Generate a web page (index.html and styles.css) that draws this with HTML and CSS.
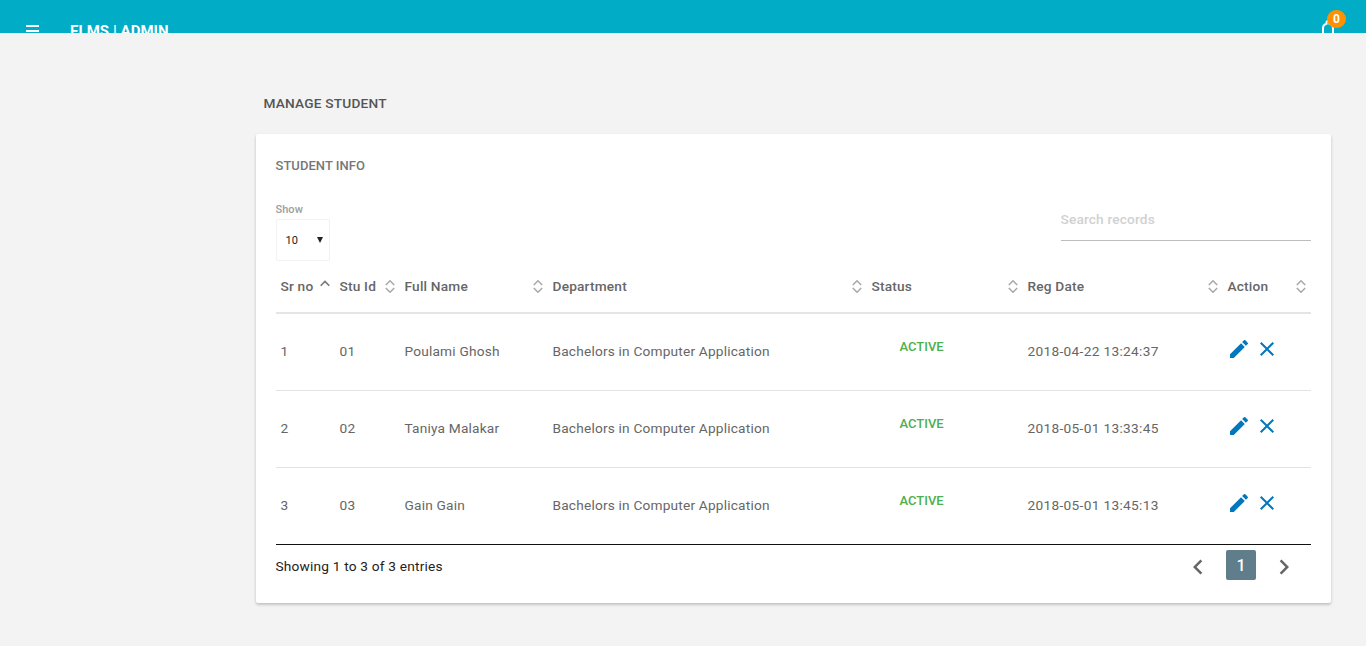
FILE: index.html
```html
<!DOCTYPE html>
<html lang="en">
<head>
<meta charset="utf-8">
<title>ELMS | Admin</title>
<link rel="stylesheet" href="styles.css">
</head>
<body>
<svg class="defs" width="0" height="0" aria-hidden="true">
  <symbol id="sort" viewBox="0 0 10 14"><path d="M.8 6 5 1.800 9.200 6M.8 9 5 13.200 9.200 9" fill="none" stroke="currentColor" stroke-width="1.600"/></symbol>
  <symbol id="asc" viewBox="0 0 10 14"><path d="M.7 6.700 5 2.400 9.300 6.700" fill="none" stroke="currentColor" stroke-width="1.600"/></symbol>
  <symbol id="edit" viewBox="0 0 24 24"><path d="M3 17.250V21h3.750L17.810 9.940l-3.750-3.750L3 17.250zM20.710 7.040a1 1 0 0 0 0-1.410l-2.340-2.340a1 1 0 0 0-1.410 0l-1.830 1.830 3.750 3.750 1.830-1.830z"/></symbol>
  <symbol id="clear" viewBox="0 0 24 24"><path d="M19 6.410 17.590 5 12 10.590 6.410 5 5 6.410 10.590 12 5 17.590 6.410 19 12 13.410 17.590 19 19 17.590 13.410 12z"/></symbol>
  <symbol id="left" viewBox="0 0 24 24"><path d="M15.410 7.410 14 6l-6 6 6 6 1.410-1.410L10.830 12z"/></symbol>
  <symbol id="right" viewBox="0 0 24 24"><path d="M10 6 8.590 7.410 13.170 12l-4.580 4.590L10 18l6-6z"/></symbol>
</svg>
<header class="topbar">
  <svg class="menu" viewBox="0 0 13 12"><path d="M0 0h13v2H0zM0 5h13v2H0zM0 10h13v2H0z"/></svg>
  <span class="brand">ELMS | ADMIN</span>
  <div class="alerts">
    <svg class="bell" viewBox="0 0 12 16"><path d="M1 16V8.500C1 5.800 2.300 4.300 4.500 3.800V2.500a1.500 1.500 0 0 1 3 0v1.300C9.700 4.300 11 5.800 11 8.500V16" fill="none" stroke="currentColor" stroke-width="2"/></svg>
    <span class="badge">0</span>
  </div>
</header>
<main class="content">
  <h1 class="page-title">MANAGE STUDENT</h1>
  <section class="card">
    <h2 class="card-title">STUDENT INFO</h2>
    <div class="tools">
      <div class="length"><span class="length-label">Show</span><div class="select"><span>10</span><svg class="caret" viewBox="0 0 6 6"><path d="M0 0h6L3 6z"/></svg></div></div>
      <input class="search" type="text" placeholder="Search records">
    </div>
    <table class="table">
      <colgroup><col class="c1"><col class="c2"><col class="c3"><col class="c4"><col class="c5"><col class="c6"><col class="c7"></colgroup>
      <thead><tr>
        <th><div class="th">Sr no<svg class="sort asc"><use href="#asc"/></svg></div></th>
        <th><div class="th">Stu Id<svg class="sort"><use href="#sort"/></svg></div></th>
        <th><div class="th">Full Name<svg class="sort"><use href="#sort"/></svg></div></th>
        <th><div class="th">Department<svg class="sort"><use href="#sort"/></svg></div></th>
        <th><div class="th">Status<svg class="sort"><use href="#sort"/></svg></div></th>
        <th><div class="th">Reg Date<svg class="sort"><use href="#sort"/></svg></div></th>
        <th><div class="th">Action<svg class="sort"><use href="#sort"/></svg></div></th>
      </tr></thead>
      <tbody>
        <tr><td>1</td><td>01</td><td>Poulami Ghosh</td><td>Bachelors in Computer Application</td><td><span class="status">ACTIVE</span></td><td class="date">2018-04-22 13:24:37</td><td><div class="actions"><svg><use href="#edit"/></svg><svg><use href="#clear"/></svg></div></td></tr>
        <tr><td>2</td><td>02</td><td>Taniya Malakar</td><td>Bachelors in Computer Application</td><td><span class="status">ACTIVE</span></td><td class="date">2018-05-01 13:33:45</td><td><div class="actions"><svg><use href="#edit"/></svg><svg><use href="#clear"/></svg></div></td></tr>
        <tr><td>3</td><td>03</td><td>Gain Gain</td><td>Bachelors in Computer Application</td><td><span class="status">ACTIVE</span></td><td class="date">2018-05-01 13:45:13</td><td><div class="actions"><svg><use href="#edit"/></svg><svg><use href="#clear"/></svg></div></td></tr>
      </tbody>
    </table>
    <div class="footer">
      <span class="info">Showing 1 to 3 of 3 entries</span>
      <nav class="pager"><svg><use href="#left"/></svg><span class="page">1</span><svg><use href="#right"/></svg></nav>
    </div>
  </section>
</main>
</body>
</html>
```
FILE: styles.css
```css
* { box-sizing: border-box; }
body { margin: 0; height: 646px; overflow: hidden; background: #f3f3f3; font-family: Roboto, sans-serif; font-size: 13.7px; letter-spacing: .19px; color: #222; }
.defs { display: none; }
.topbar { display: flex; align-items: flex-start; height: 33px; padding: 0 20px 0 26px; overflow: hidden; background: #00acc6; color: #fff; }
.menu { flex: none; width: 13px; height: 12px; margin-top: 25px; fill: #fff; }
.brand { margin: 21px 0 0 31px; font-size: 15px; line-height: 20px; font-weight: 700; letter-spacing: .05px; white-space: nowrap; }
.alerts { position: relative; width: 24px; height: 38px; margin-left: auto; }
.bell { position: absolute; left: 0; top: 20px; width: 12px; height: 16px; }
.badge { position: absolute; left: 5px; top: 10px; width: 19px; height: 18px; border-radius: 9px; background: #ff9100; font-size: 12px; line-height: 18px; font-weight: 700; letter-spacing: 0; text-align: center; }
.content { padding: 60px 35px 0 256px; }
.page-title { height: 20px; margin: 0 0 21px; padding-left: 7.5px; font-size: 13.7px; line-height: 20px; font-weight: 500; letter-spacing: .19px; color: #555; }
.card { height: 469px; padding: 22px 20px 0; background: #fff; border-radius: 2px; box-shadow: 0 2px 3px rgba(0,0,0,.14), 0 1px 3px rgba(0,0,0,.1); }
.card-title { margin: 0 0 0 -.5px; font-size: 13px; line-height: 20px; font-weight: 500; letter-spacing: .04px; color: #777; }
.tools { display: flex; justify-content: space-between; height: 83px; padding-top: 26px; }
.length-label { display: block; height: 17px; margin-left: -.5px; font-size: 11px; line-height: 16px; font-weight: 500; color: #9e9e9e; letter-spacing: .05px; }
.select { display: flex; align-items: center; justify-content: space-between; width: 54px; height: 42px; padding: 0 6px 0 8.5px; border: 1px solid #f2f2f2; border-radius: 2px; font-size: 11px; font-weight: 400; }
.caret { width: 6px; height: 6px; fill: #222; }
.search { width: 250px; height: 44px; margin-top: -5px; padding: 0; border: 0; border-bottom: 1px solid #bdbdbd; outline: 0; background: none; font: 500 13.7px Roboto, sans-serif; letter-spacing: .15px; text-indent: -.5px; }
.search::placeholder { color: #d1d1d1; }
.table { width: 1035px; table-layout: fixed; border-collapse: separate; border-spacing: 0; border-bottom: 1px solid #111; color: #666; }
.c1 { width: 59px; } .c2 { width: 65px; } .c3 { width: 148px; } .c4 { width: 319px; } .c5 { width: 156px; } .c6 { width: 200px; } .c7 { width: 88px; }
th { height: 55px; padding: 0 5px 0 4.500px; border-bottom: 2px solid #e5e5e5; text-align: left; font-weight: 500; }
.th { display: flex; align-items: center; justify-content: space-between; }
.sort { width: 10px; height: 14px; color: #aaa; }
.asc { color: #777; }
td { height: 77px; padding: 0 4.500px 2px; border-bottom: 1px solid #e3e3e3; white-space: nowrap; }
.date { letter-spacing: .31px; }
tbody tr:last-child td { height: 76px; border-bottom: 0; }
.status { display: block; margin: -10px 0 0 28px; font-size: 13px; font-weight: 500; letter-spacing: 0; color: #4caf50; }
.actions { display: flex; gap: 4px; margin: -4px 0 0 -.3px; }
.actions svg { flex: none; width: 24px; height: 24px; fill: #0277bd; }
.footer { display: flex; justify-content: space-between; height: 40px; padding-top: 5px; }
.info { margin-left: -.5px; line-height: 32px; }
.pager { display: flex; align-items: flex-start; gap: 13px; height: 31px; padding-right: 12px; }
.pager svg { width: 30px; height: 30px; margin-top: 1.5px; fill: #666; }
.page { width: 30px; height: 30px; border-radius: 2px; background: #607d8b; color: #fff; font-size: 16px; line-height: 31px; font-weight: 500; letter-spacing: 0; text-align: center; }
```
